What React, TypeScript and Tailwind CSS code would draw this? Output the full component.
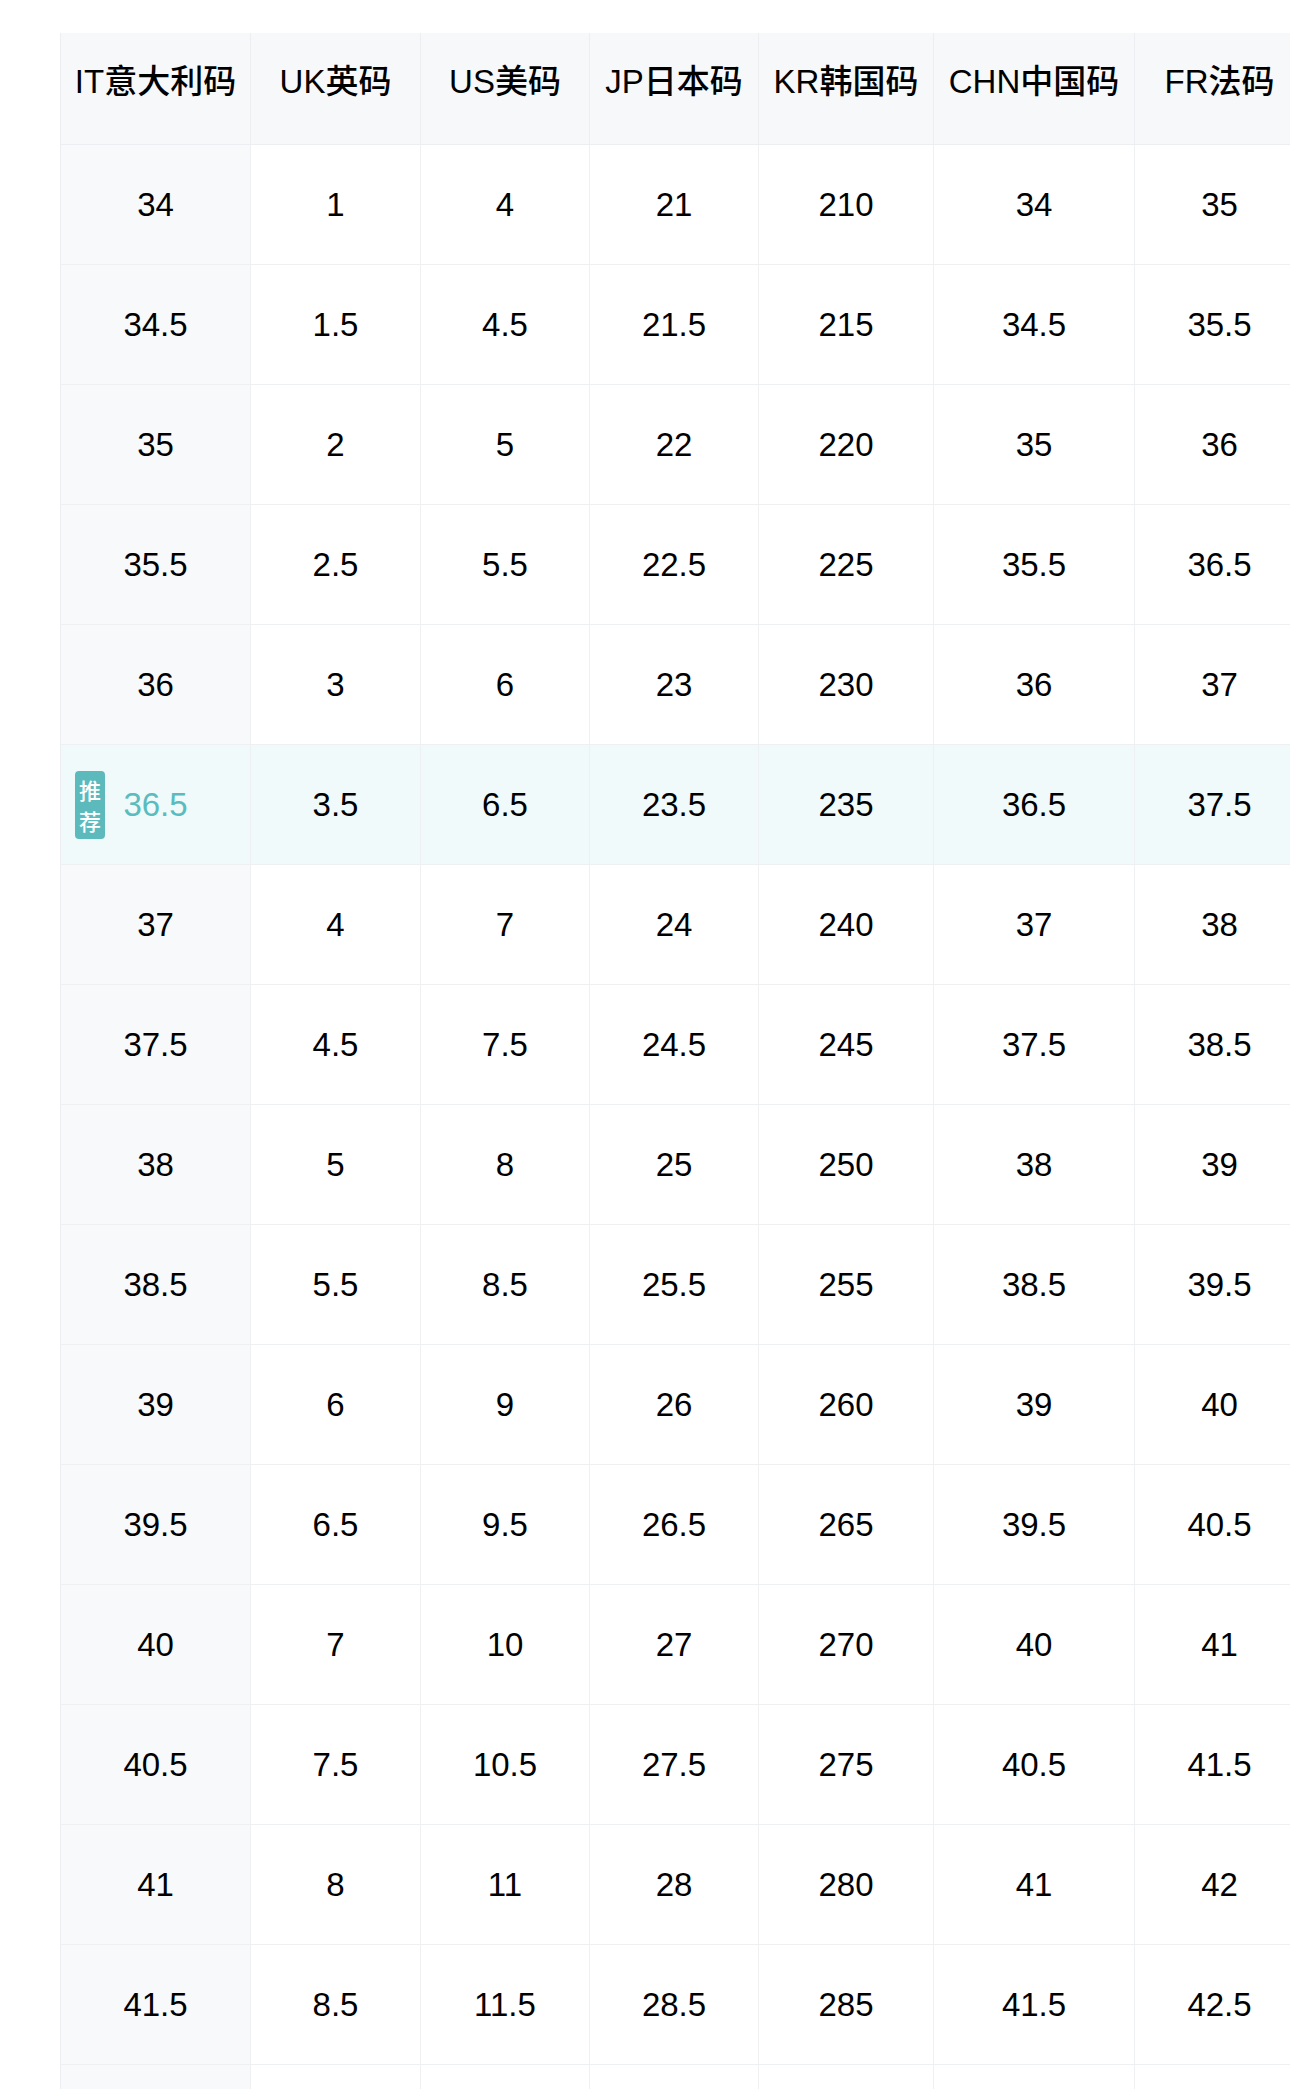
import React from "react";

const headers = ["IT意大利码", "UK英码", "US美码", "JP日本码", "KR韩国码", "CHN中国码", "FR法码"];

function fmt(n: number) {
  return Number.isInteger(n) ? String(n) : n.toFixed(1);
}

const rows: string[][] = [];
for (let i = 0; i < 16; i++) {
  const it = 34 + i * 0.5;
  rows.push([fmt(it), fmt(1 + i * 0.5), fmt(4 + i * 0.5), fmt(21 + i * 0.5), String(210 + i * 5), fmt(it), fmt(35 + i * 0.5)]);
}
rows.push(["", "", "", "", "", "", ""]);

const font = { fontFamily: '"Liberation Sans", Arial, "Noto Sans CJK SC", sans-serif' };

export default function App() {
  return (
    <div className="w-[1290px] h-[2089px] overflow-hidden bg-white" style={font}>
      <div className="pt-[33px] pl-[60px]">
        <div className="grid grid-cols-[190px_170px_169px_169px_175px_201px_170px] w-[1244px] border-l border-[#eceef1]">
          {headers.map((h) => (
            <div
              key={h}
              className="h-[112px] flex items-center justify-center pb-[14px] bg-[#f7f8fa] border-r border-b border-[#eceef1] text-[33px] font-medium text-black whitespace-nowrap"
            >
              {h}
            </div>
          ))}
          {rows.map((r, ri) => {
            const hl = ri === 5;
            return r.map((v, ci) => (
              <div
                key={`${ri}-${ci}`}
                className={
                  "relative h-[120px] flex items-center justify-center border-r border-b border-[#eef0f2] text-[33px] " +
                  (hl
                    ? "bg-[#f0fafa] " + (ci === 0 ? "text-[#5bbcbf]" : "text-black")
                    : ci === 0
                    ? "bg-[#f8f9fb] text-black"
                    : "bg-white text-black")
                }
              >
                {hl && ci === 0 && (
                  <div
                    className="absolute left-[14px] top-1/2 -translate-y-1/2 w-[30px] h-[68px] rounded-[4px] bg-[#5cbabd] text-white text-[22px] leading-[31px] font-medium flex flex-col items-center justify-center"
                    style={{ fontFamily: '"Noto Sans CJK SC", sans-serif' }}
                  >
                    <span>推</span>
                    <span>荐</span>
                  </div>
                )}
                {v}
              </div>
            ));
          })}
        </div>
      </div>
    </div>
  );
}
